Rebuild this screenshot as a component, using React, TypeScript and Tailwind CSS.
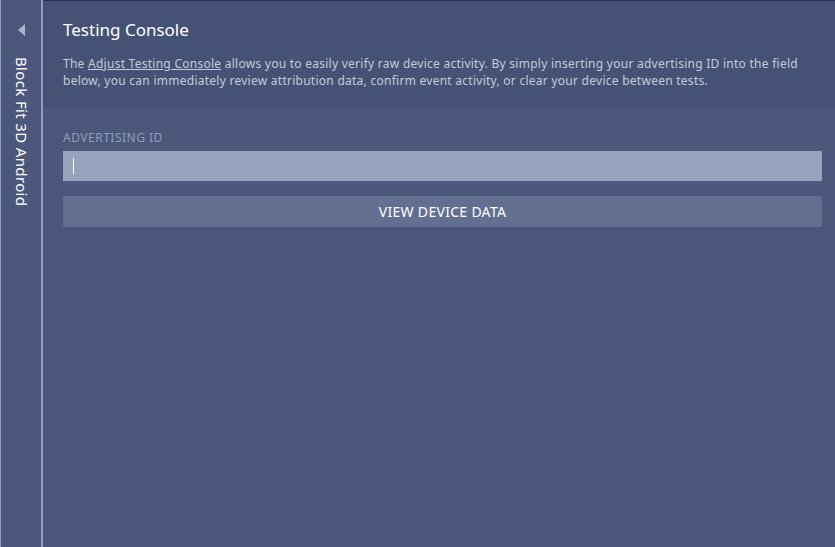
import React from 'react';

const App: React.FC = () => {
  return (
    <div className="flex h-[547px] w-[835px] overflow-hidden bg-[#4b587c] font-['Noto_Sans',sans-serif]">
      {/* sidebar */}
      <div className="flex w-[43px] shrink-0 flex-col items-center border-l border-r-2 border-l-[#8f9fc0] border-r-[#8f9fc0] bg-[#4b587c] pt-[24px]">
        <svg width="8" height="12" viewBox="0 0 8 12" className="ml-[1px]">
          <path d="M7 0 L7 12 L0 6 Z" fill="#a9b5cd" />
        </svg>
        <div className="mt-[21px] text-[15px] leading-none tracking-[0.35px] text-white [writing-mode:vertical-rl]">
          Block Fit 3D Android
        </div>
      </div>

      {/* main */}
      <div className="flex min-w-0 flex-1 flex-col border-t border-t-[#2b3456]">
        <div className="h-[106px] bg-[#465275] pl-[20px] pr-[20px] pt-[18px]">
          <h1 className="text-[17px] leading-[22px] text-white">Testing Console</h1>
          <p className="mt-[14px] text-[12px] leading-[17px] tracking-[0.26px] text-[#c3cadb]">
            The <span className="underline">Adjust Testing Console</span> allows you to easily verify raw device activity. By simply inserting your advertising ID into the field below, you can immediately review attribution data, confirm event activity, or clear your device between tests.
          </p>
        </div>
        <div className="flex flex-col pl-[20px] pr-[13px] pt-[24px]">
          <label className="text-[12px] leading-[14px] tracking-[0.5px] text-[#909cb9]">ADVERTISING ID</label>
          <div className="mt-[6px] flex h-[30px] items-center bg-[#95a3bd] pl-[10px]">
            <div className="h-[16px] w-[1px] bg-white" />
          </div>
          <button className="mt-[15px] h-[31px] rounded-[2px] bg-[#636f90] text-[14px] tracking-[0.3px] text-white">
            VIEW DEVICE DATA
          </button>
        </div>
      </div>
    </div>
  );
};

export default App;
